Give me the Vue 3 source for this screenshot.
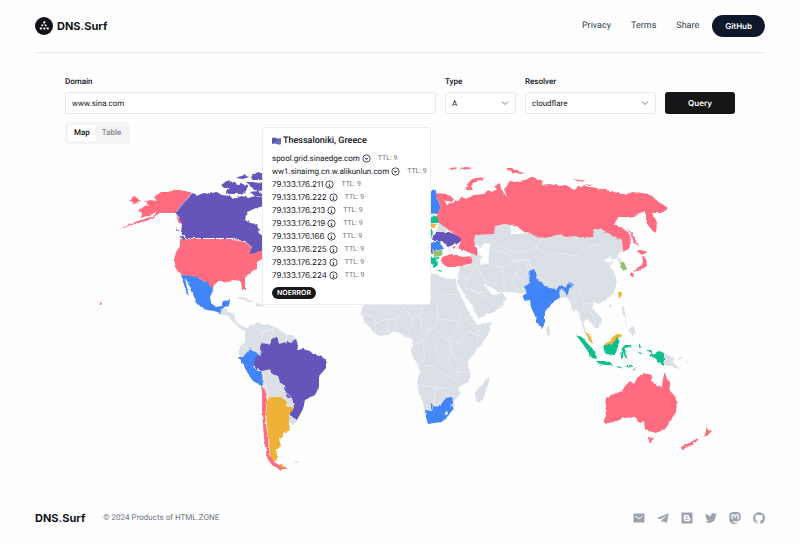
<script setup>
import { ref } from 'vue'

const domain = ref('www.sina.com')
const type = ref('A')
const resolver = ref('cloudflare')
const view = ref('Map')

const answers = [
  { value: 'spool.grid.sinaedge.com', kind: 'alias' },
  { value: 'ww1.sinaimg.cn.w.alikunlun.com', kind: 'alias' },
  { value: '79.133.176.211', kind: 'ip' },
  { value: '79.133.176.222', kind: 'ip' },
  { value: '79.133.176.213', kind: 'ip' },
  { value: '79.133.176.219', kind: 'ip' },
  { value: '79.133.176.166', kind: 'ip' },
  { value: '79.133.176.225', kind: 'ip' },
  { value: '79.133.176.223', kind: 'ip' },
  { value: '79.133.176.224', kind: 'ip' },
]

const land = [
  // Central America and the Caribbean
  'M221 309L226 308 228 312 234 313 235 320 240 325 246 327 245 331 239 328 233 322 229 317 220 313Z',
  'M236 298L242 297 254 302 248 302 241 299Z',
  'M256 303L264 305 263 307 256 306Z',
  // South America
  'M245 331L250 325 253 325 258 322 262 325 270 325 275 327 280 330 284 333 287 335 293 335 298 340 298 348 285 375 292 398 294 407 289 406 281 399 268 398 263 388 258 356 246 355 241 357 239 354 238 350 241 346 245 341Z',
  'M289 415L297 419 297 422 293 424 289 423 288 419Z',
  'M293 462L298 461 297 463Z',
  // Africa
  'M363 304L361 314 365 322 370 328 374 333 379 336 388 335 396 332 401 333 405 337 411 338 413 345 411 352 414 358 418 365 420 373 417 383 418 390 422 400 425 411 440 414 454 406 455 400 460 396 459 387 463 385 470 381 470 374 469 367 468 362 473 354 481 345 488 335 492 322 484 323 477 325 473 319 468 311 464 302 457 287 456 279 449 279 443 278 438 275 430 273 426 282 410 280 400 276 380 279 371 290Z',
  'M489 376L489 383 486 391 483 400 479 403 476 401 475 394 478 388 482 385 485 381Z',
  // Arabia and the Middle East
  'M457 282L458 275 459 267 472 264 478 257 481 265 488 264 491 235 540 233 620 228 624 247 621 252 617 256 624 262 621 264 617 258 612 260 611 257 605 259 604 262 608 263 613 262 610 266 615 273 617 283 613 294 606 300 599 304 594 302 592 308 598 314 602 319 601 324 596 329 594 326 587 319 583 321 586 332 592 342 590 341 584 332 581 321 578 310 573 311 568 297 560 298 540 297 526 293 519 294 514 292 500 292 494 289 491 287 487 286 483 282 486 288 491 292 491 295 498 295 501 291 506 298 502 306 494 312 479 318 476 314 472 305 465 296Z',
  'M471 256L469 251 477 253 481 257 480 263 472 262Z',
  'M474 236L480 234 492 234 495 225 510 224 512 240 494 244 484 243 481 248 474 242Z',
  'M437 225L441 223 447 228 446 233 436 233Z',
  // South and south-east Asian islands
  'M547 326L550 330 550 335 547 334Z',
  'M621 306L624 307 625 314 628 319 623 315Z',
  'M628 329L633 326 636 333 632 336 629 331Z',
  'M625 320L627 325 626 327Z',
  'M664 353L669 355 674 359 673 362 681 370 676 369 671 366 664 366Z',
  'M677 359L683 356 680 360Z',
  'M613 305L609 305 610 308Z',
  'M686 361L689 363 687 363Z',
  // Western Europe
  'M380 262L398 257 392 246 410 238 431 236 431 256 420 252 405 259 395 270 381 270Z',
  'M406 222L405 208 420 192 431 190 431 197 419 210 416 224Z',
  // Small Pacific islands
  'M704 394L706 396 705 396Z',
  'M729 386L730 387 729 388Z',
]

const countries = [
  // Alaska and mainland United States
  { fill: '#ff6b7f', d: 'M192 193L185 191 175 190 168 192 161 192 154 197 157 201 150 200 145 202 149 205 143 206 138 211 142 213 141 217 150 216 156 211 155 215 148 218 135 222 126 226 118 229 135 224 149 220 160 213 168 213 175 213 178 218 181 215 183 222 184 227 179 223 175 213Z' },
  { fill: '#ff6b7f', d: 'M129 201L135 196 138 199 141 201 134 204 132 202ZM143 189L146 190 143 190Z' },
  { fill: '#ff6b7f', d: 'M182 239L233 239 238 241 246 242 252 248 249 254 256 252 264 248 264 258 257 262 257 268 251 272 245 277 245 290 242 289 241 281 233 280 228 282 219 281 214 285 213 289 209 286 207 281 203 282 198 277 187 277 180 274 176 269 174 260 176 252 180 246 180 240Z' },
  { fill: '#ff6b7f', d: 'M100 303L102 303 101 305ZM97 301L98 301 98 302Z' },
  // Canada with its Arctic islands
  { fill: '#6554ba', d: 'M192 193L198 195 204 193 209 194 216 192 222 195 230 196 233 199 242 196 249 198 254 196 264 198 264 206 256 208 247 212 245 219 248 222 257 225 260 234 264 237 264 249 255 253 249 254 252 247 245 241 238 240 233 238 187 238 181 233 182 224 178 216 175 212Z' },
  { fill: '#6554ba', d: 'M221 185L227 181 235 182 238 186 232 188 224 188ZM225 192L231 187 242 184 248 185 246 191 241 194 230 194ZM236 178L244 175 249 177 243 179ZM250 177L258 172 264 174 264 180 254 180ZM246 182L253 182 264 184 264 191 254 190 251 186ZM250 192L258 191 264 194 264 197 255 196ZM181 235L186 239 184 240 180 237ZM176 227L179 231 177 231Z' },
  { fill: '#4285f8', d: 'M181 275L198 277 203 282 207 281 213 289 210 297 211 303 216 307 221 306 223 301 230 300 228 306 223 308 220 313 214 311 207 310 197 305 195 298 191 291 187 281 185 278 187 288 189 296 186 291 184 284Z' },
  // South America
  { fill: '#4285f8', d: 'M239 357L243 357 250 349 256 352 260 356 254 361 254 367 257 371 262 371 263 387 253 381 248 374 243 364Z' },
  { fill: '#6554ba', d: 'M261 343L267 344 271 343 271 339 277 337 279 344 286 342 291 343 296 339 298 347 297 350 303 349 310 351 313 354 320 356 326 360 326 368 319 376 319 387 315 395 305 400 303 409 297 420 289 414 294 407 292 398 286 396 285 386 280 382 278 376 271 373 269 369 263 371 256 369 253 363 256 357 261 355 260 348Z' },
  { fill: '#ff6b7f', d: 'M262 387L265 390 267 400 265 417 267 432 270 456 277 464 287 468 281 470 272 465 267 458 264 438 262 410Z' },
  { fill: '#efb239', d: 'M269 397L275 397 281 397 287 402 286 406 292 407 294 408 289 415 289 425 291 430 283 433 283 438 279 438 281 446 276 450 278 457 276 462 271 458 268 436 266 415 267 402ZM281 464L287 469 281 467Z' },
  // South Africa
  { fill: '#4285f8', d: 'M425 410L431 411 431 403 435 407 441 404 446 398 452 397 453 403 451 406 454 408 448 416 442 422 434 423 428 424 426 417Z' },
  // Finland, Baltics and eastern Europe
  { fill: '#4285f8', d: 'M428 192L436 190 437 197 441 209 438 213 430 214Z' },
  { fill: '#0dbf8d', d: 'M431 217L438 216 439 223 430 223ZM427 229L433 229 432 238 427 238Z' },
  { fill: '#efb239', d: 'M429 223L436 224 435 228 430 227Z' },
  { fill: '#6554ba', d: 'M433 236L436 232 449 232 461 237 461 242 452 245 448 247 442 241 432 241ZM428 248L432 248 433 253 429 252Z' },
  { fill: '#4285f8', d: 'M430 243L440 241 444 249 434 251 430 248Z' },
  { fill: '#95c36b', d: 'M433 251L443 250 441 256 434 257Z' },
  { fill: '#0dbf8d', d: 'M429 258L440 257 436 260 438 265 434 268 431 263ZM436 270L441 270 440 271Z' },
  { fill: '#ff6b7f', d: 'M442 257L452 254 463 257 471 256 473 263 460 266 454 267 445 266 441 261ZM452 247L456 246 454 249Z' },
  // Russia and its Arctic islands
  { fill: '#ff6b7f', d: 'M436 193L446 194 454 199 452 202 444 200 447 205 454 202 459 200 462 196 466 199 474 195 484 194 488 190 492 192 497 189 494 186 500 183 501 189 507 197 504 188 510 181 516 182 524 180 533 177 543 181 541 185 549 184 560 186 566 185 574 190 580 186 592 187 601 189 611 191 617 193 628 195 632 192 642 193 650 194 657 201 668 208 662 213 652 213 657 222 656 233 650 228 646 222 646 211 637 214 634 217 618 217 614 225 622 228 628 232 631 239 629 249 623 252 622 240 614 237 603 230 594 229 593 237 583 238 575 236 567 237 558 234 552 237 542 238 533 235 525 232 516 226 505 224 495 226 494 234 475 235 474 241 477 249 478 256 468 252 458 248 462 239 451 232 446 228 438 222 437 213 441 209Z' },
  { fill: '#ff6b7f', d: 'M466 190L467 184 472 179 483 177 484 179 476 181 471 186 473 190ZM448 169L455 167 457 169 451 170ZM459 168L467 167 472 168 466 170ZM506 168L512 168 517 171 524 173 520 174 512 172ZM573 179L580 180 586 180 580 182ZM585 184L593 184 590 185ZM644 189L646 190 644 190ZM628 228L632 234 637 242 639 247 635 243 631 236Z' },
  // Japan, Korea and Taiwan
  { fill: '#ff6b7f', d: 'M639 249L644 251 647 252 642 255 638 252ZM642 256L646 258 647 266 641 270 633 272 637 268 642 265 643 261ZM631 272L634 274 632 278 630 275Z' },
  { fill: '#95c36b', d: 'M620 263L624 262 627 269 623 271Z' },
  { fill: '#efb239', d: 'M619 292L621 292 620 299 618 296Z' },
  // India
  { fill: '#4285f8', d: 'M528 271L534 269 537 274 536 279 542 283 549 288 557 289 559 286 565 287 570 281 573 285 569 289 568 295 565 292 562 289 559 292 560 297 554 302 549 306 545 312 545 322 542 329 539 326 535 316 531 307 530 300 525 301 522 296 527 293 524 287 530 283Z' },
  // Malaysia and Indonesia
  { fill: '#efb239', d: 'M586 333L590 334 593 344 589 341ZM603 345L610 341 614 336 618 333 622 336 618 338 611 345 605 347Z' },
  { fill: '#0dbf8d', d: 'M576 335L582 337 589 345 595 351 597 359 592 358 587 350 582 343ZM596 361L604 361 610 362 614 366 606 365 599 364ZM603 345L611 345 618 337 619 342 617 350 615 355 605 354ZM622 348L625 345 632 345 631 347 624 348 627 351 625 353 628 359 625 357 623 352 623 359 621 358ZM616 366L623 367 619 368ZM625 366L633 366 630 368ZM633 369L636 367 634 371ZM639 343L641 347 639 348ZM638 352L643 353 640 354ZM646 350L651 350 654 355 659 351 664 353 664 367 659 362 655 358 649 356 652 353Z' },
  // Australia and New Zealand
  { fill: '#ff6b7f', d: 'M606 398L611 395 617 393 622 391 625 386 630 381 634 384 637 378 642 375 644 373 652 375 651 380 658 386 662 387 663 378 665 372 667 379 670 382 670 391 674 395 677 402 676 412 670 422 665 429 656 433 645 430 644 421 640 423 635 417 624 418 615 422 609 423 603 422 606 416 605 407ZM648 437L654 438 650 443Z' },
  { fill: '#ff6b7f', d: 'M706 426L708 430 712 431 707 436 703 438 706 433ZM698 438L696 442 687 447 682 450 681 447 691 442Z' },
]

const borders = [
  'M363 304L430 304M374 304L386 315 394 307M363 314L374 317 376 323 387 319 397 319 405 306M376 323L375 334M387 320L389 334M397 319L394 332M405 308L412 319 421 314 422 304M413 320L407 337M420 315L422 333 434 327 438 319 437 304 431 299 430 274M413 345L423 341 430 330M434 328L446 340 455 334 459 320 463 309M446 340L460 343 468 331 484 337M450 341L451 354 448 363 457 372 458 382M435 344L439 359 433 366 420 366M451 354L469 365M457 372L470 372M417 385L446 388M435 370L449 377 457 380M436 388L432 410M437 389L449 396M423 343L425 360 418 364M438 319L459 321M465 320L478 330 478 345M443 294L463 295M449 347L452 351',
  'M459 275L468 280 465 288 477 292 489 299M468 280L476 265M477 292L488 292M488 265L502 267 505 291M502 267L514 261 519 269 512 280 520 294M491 249L504 252 514 261 529 259 532 270M500 246L515 253 526 251 536 247 543 236M536 247L548 255 558 253 574 256 587 248 602 243M529 259L526 269M552 286L540 278 535 270M568 283L580 289 584 303M584 303L592 304M584 304L580 315M584 308L592 314 596 323M489 303L500 307M515 276L525 281M475 264L486 281M477 258L486 263',
  'M241 346L252 350 262 343 262 331 253 327M271 340L273 328M262 332L276 328M286 344L287 335M263 371L264 382 270 396M276 397L281 388 291 397',
  'M220 309L227 313M229 318L235 319',
]

const socials = [
  { name: 'Email', d: 'M2 3h20a1 1 0 0 1 1 1v16a1 1 0 0 1-1 1H2a1 1 0 0 1-1-1V4a1 1 0 0 1 1-1zm1.500 4v1.500L12 14l8.500-5.500V7L12 12.200z' },
  { name: 'Telegram', d: 'M22.300 3.100L1.800 11.200c-1.200.5-1.200 1.300-.1 1.700l5.100 1.700L18.600 7.200c.6-.4 1.100-.1.600.3L9.600 16.200l-.3 4.700c.6 0 .8-.2 1.100-.5l2.500-2.400 5 3.700c.9.5 1.600.3 1.800-.8l3.300-16c.3-1.400-.5-2-1.400-1.700z' },
  { name: 'Blogger', d: 'M2 1h20a1 1 0 0 1 1 1v20a1 1 0 0 1-1 1H2a1 1 0 0 1-1-1V2a1 1 0 0 1 1-1zm7 4.500A3.500 3.500 0 0 0 5.500 9v6A3.500 3.500 0 0 0 9 18.500h6.200A3.500 3.500 0 0 0 18.700 15v-2.200c0-1-.7-1.500-1.600-1.700-.6-.2-.7-.6-.7-1.300A4.300 4.300 0 0 0 12 5.500zm.6 3.100h3a1.100 1.100 0 0 1 0 2.200h-3a1.100 1.100 0 0 1 0-2.200zm0 4.800h5a1.100 1.100 0 0 1 0 2.200h-5a1.100 1.100 0 0 1 0-2.200z' },
  { name: 'Twitter', d: 'M23.953 4.570a10 10 0 0 1-2.825.775 4.958 4.958 0 0 0 2.163-2.723c-.951.555-2.005.959-3.127 1.184a4.920 4.920 0 0 0-8.384 4.482C7.690 8.095 4.067 6.130 1.640 3.162a4.822 4.822 0 0 0-.666 2.475c0 1.710.870 3.213 2.188 4.096a4.904 4.904 0 0 1-2.228-.616v.060a4.923 4.923 0 0 0 3.946 4.827 4.996 4.996 0 0 1-2.212.085 4.936 4.936 0 0 0 4.604 3.417 9.867 9.867 0 0 1-6.102 2.105c-.390 0-.779-.023-1.170-.067a13.995 13.995 0 0 0 7.557 2.209c9.053 0 13.998-7.496 13.998-13.985 0-.210 0-.420-.015-.630A9.935 9.935 0 0 0 24 4.590z' },
  { name: 'Mastodon', d: 'M23.268 5.313c-.35-2.578-2.617-4.61-5.304-5.004C17.51.242 15.792 0 11.813 0h-.03c-3.98 0-4.835.242-5.288.309C3.882.692 1.496 2.518.917 5.127.64 6.412.61 7.837.661 9.143c.074 1.874.088 3.745.26 5.611.118 1.24.325 2.47.62 3.68.55 2.237 2.777 4.098 4.96 4.857 2.336.792 4.849.923 7.256.38.265-.061.527-.132.786-.213.585-.184 1.27-.39 1.774-.753a.057.057 0 0 0 .023-.043v-1.809a.052.052 0 0 0-.02-.041.053.053 0 0 0-.046-.01 20.282 20.282 0 0 1-4.709.545c-2.73 0-3.463-1.284-3.674-1.818a5.593 5.593 0 0 1-.319-1.433.053.053 0 0 1 .066-.054c1.517.363 3.072.546 4.632.546.376 0 .75 0 1.125-.01 1.57-.044 3.224-.124 4.768-.422.038-.008.077-.015.11-.024 2.435-.464 4.753-1.92 4.989-5.604.008-.145.03-1.52.03-1.67.002-.512.167-3.63-.024-5.545zm-3.748 9.195h-2.561V8.29c0-1.309-.55-1.976-1.67-1.976-1.23 0-1.846.79-1.846 2.35v3.403h-2.546V8.663c0-1.56-.617-2.35-1.848-2.35-1.112 0-1.668.668-1.67 1.977v6.218H4.822V8.102c0-1.31.337-2.35 1.011-3.12.696-.77 1.608-1.164 2.74-1.164 1.311 0 2.302.5 2.962 1.498l.638 1.06.638-1.06c.66-.999 1.65-1.498 2.96-1.498 1.13 0 2.043.395 2.74 1.164.675.77 1.012 1.81 1.012 3.12z' },
  { name: 'GitHub', d: 'M12 .297c-6.630 0-12 5.373-12 12 0 5.303 3.438 9.800 8.205 11.385.600.113.820-.258.820-.577 0-.285-.010-1.040-.015-2.040-3.338.724-4.042-1.610-4.042-1.610C4.422 18.070 3.633 17.700 3.633 17.700c-1.087-.744.084-.729.084-.729 1.205.084 1.838 1.236 1.838 1.236 1.070 1.835 2.809 1.305 3.495.998.108-.776.417-1.305.760-1.605-2.665-.300-5.466-1.332-5.466-5.930 0-1.310.465-2.380 1.235-3.220-.135-.303-.540-1.523.105-3.176 0 0 1.005-.322 3.300 1.230.960-.267 1.980-.399 3-.405 1.020.006 2.040.138 3 .405 2.280-1.552 3.285-1.230 3.285-1.230.645 1.653.240 2.873.120 3.176.765.840 1.230 1.910 1.230 3.220 0 4.610-2.805 5.625-5.475 5.920.420.360.810 1.096.810 2.220 0 1.606-.015 2.896-.015 3.286 0 .315.210.690.825.570C20.565 22.092 24 17.592 24 12.297c0-6.627-5.373-12-12-12' },
]
</script>

<template>
  <div class="page">
    <header class="header">
      <a class="brand" href="#">
        <svg class="brand-mark" viewBox="0 0 26 26" aria-hidden="true">
          <circle cx="13" cy="13" r="13" fill="#111318" />
          <path d="M13 8L9 17M13 8L17 17" stroke="#777" stroke-width="1" />
          <g fill="#fff">
            <rect x="12" y="6" width="3" height="3" rx="1" />
            <rect x="9" y="11" width="3" height="2" rx="1" />
            <rect x="14" y="11" width="3" height="2" rx="1" />
            <rect x="7" y="15" width="3" height="3" rx="1" />
            <rect x="12" y="15" width="3" height="3" rx="1" />
            <rect x="17" y="15" width="3" height="3" rx="1" />
          </g>
        </svg>
        <span class="brand-name">DNS<i>.</i>Surf</span>
      </a>
      <nav class="nav">
        <a href="#">Privacy</a>
        <a href="#">Terms</a>
        <a href="#">Share</a>
        <a class="github" href="#">GitHub</a>
      </nav>
    </header>

    <main class="main">
      <form class="query" @submit.prevent>
        <div class="field field-domain">
          <label for="domain">Domain</label>
          <input id="domain" v-model="domain" class="control" type="text" />
        </div>
        <div class="field field-type">
          <label for="type">Type</label>
          <div class="select">
            <select id="type" v-model="type" class="control">
              <option>A</option>
              <option>AAAA</option>
              <option>CNAME</option>
            </select>
            <svg viewBox="0 0 8 8" aria-hidden="true"><path d="M1 2.500L4 5.500 7 2.500" /></svg>
          </div>
        </div>
        <div class="field field-resolver">
          <label for="resolver">Resolver</label>
          <div class="select">
            <select id="resolver" v-model="resolver" class="control">
              <option>cloudflare</option>
              <option>google</option>
            </select>
            <svg viewBox="0 0 8 8" aria-hidden="true"><path d="M1 2.500L4 5.500 7 2.500" /></svg>
          </div>
        </div>
        <button class="submit" type="submit">Query</button>
      </form>

      <section class="results">
        <div class="tabs" role="tablist">
          <button
            v-for="tab in ['Map', 'Table']"
            :key="tab"
            type="button"
            role="tab"
            :aria-selected="view === tab"
            :class="['tab', { active: view === tab }]"
            @click="view = tab"
          >{{ tab }}</button>
        </div>

        <svg class="map" viewBox="65 144 670 346" role="img" aria-label="World map of DNS answers">
          <defs>
            <filter id="coast" x="0" y="0" width="1" height="1" color-interpolation-filters="sRGB">
              <feTurbulence type="fractalNoise" baseFrequency="0.25" numOctaves="2" seed="4" result="noise" />
              <feDisplacementMap in="SourceGraphic" in2="noise" scale="3" xChannelSelector="R" yChannelSelector="G" />
            </filter>
          </defs>
          <g filter="url(#coast)">
            <rect x="65" y="144" width="670" height="346" fill="none" />
            <path v-for="d in land" :key="d" :d="d" fill="#dae0e6" />
            <path v-for="c in countries" :key="c.d" :d="c.d" :fill="c.fill" />
            <circle cx="446" cy="413" r="2" fill="#dae0e6" />
          </g>
          <path v-for="d in borders" :key="d" :d="d" class="border" />
          <path d="M192 193L176 212" class="border" />
          <path d="M100 302L102 304 100 305Z" fill="#ff6b7f" />
        </svg>

        <div class="tooltip" role="tooltip">
          <h2>
            <svg viewBox="0 0 9 8" aria-hidden="true">
              <path d="M0 1Q2 0 4 1T9 1V7Q7 8 5 7T0 7Z" fill="#5656a8" />
              <path d="M4 3H9M4 5H9M0 6H9" stroke="#9d9dd2" stroke-width=".5" />
            </svg>
            Thessaloniki, Greece
          </h2>
          <ul>
            <li v-for="a in answers" :key="a.value">
              <span :class="a.kind">{{ a.value }}</span>
              <svg viewBox="0 0 16 16" aria-hidden="true">
                <circle cx="8" cy="8" r="6.500" />
                <path v-if="a.kind === 'ip'" d="M6.500 7.500H8V11.500M6.500 11.500H9.500M8 4.500V5.500" />
                <path v-else d="M5 6.500L8 9.500 11 6.500M6 8.500H10" />
              </svg>
              <small>TTL: 9</small>
            </li>
          </ul>
          <span class="status">NOERROR</span>
        </div>
      </section>
    </main>

    <footer class="footer">
      <a class="brand-name" href="#">DNS<i>.</i>Surf</a>
      <span class="copyright">© 2024 Products of HTML.ZONE</span>
      <div class="socials">
        <a v-for="s in socials" :key="s.name" href="#" :aria-label="s.name">
          <svg viewBox="0 0 24 24" aria-hidden="true"><path :d="s.d" fill-rule="evenodd" /></svg>
        </a>
      </div>
    </footer>
  </div>
</template>

<style>
body {
  background: #fefefe;
}
</style>

<style scoped>
.page {
  box-sizing: border-box;
  padding: 0 35px;
  font-family: Roboto, "Liberation Sans", sans-serif;
  font-size: 8px;
  color: #111318;
  text-rendering: geometricPrecision;
}
.brand-name,
.github,
.submit,
.ip,
.status {
  font-family: Inter, "Liberation Sans", sans-serif;
}
a {
  color: inherit;
  text-decoration: none;
}
.header {
  display: flex;
  align-items: center;
  justify-content: space-between;
  height: 52px;
  border-bottom: 1px solid #e9eaec;
}
.brand {
  display: flex;
  align-items: center;
  gap: 4px;
}
.brand-mark {
  width: 18px;
  height: 18px;
}
.brand-name {
  font-size: 11px;
  font-weight: 700;
}
.brand-name i {
  font-style: normal;
  color: #4f46e5;
}
.nav {
  display: flex;
  align-items: center;
  gap: 20px;
  font-size: 9px;
  color: #334155;
}
.github {
  margin-left: -7px;
  padding: 0 13px;
  border-radius: 11px;
  background: #0f172a;
  color: #fff;
  font-size: 8px;
  font-weight: 600;
  line-height: 22px;
}
.main {
  padding: 24px 30px 0;
}
.query {
  display: flex;
  align-items: flex-end;
  gap: 9px;
}
.field {
  display: flex;
  flex-direction: column;
  gap: 5px;
}
.field-domain {
  flex: 1;
}
.field-type {
  width: 71px;
}
.field-resolver {
  width: 131px;
}
label {
  font-size: 8px;
  font-weight: 500;
  line-height: 10px;
}
.control {
  box-sizing: border-box;
  width: 100%;
  height: 22px;
  padding: 0 6px;
  border: 1px solid #e8e8eb;
  border-radius: 3px;
  background: #fff;
  color: #18181b;
  font: inherit;
  text-rendering: inherit;
  appearance: none;
}
.select {
  position: relative;
}
.select svg {
  position: absolute;
  top: 7px;
  right: 7px;
  width: 8px;
  height: 8px;
  fill: none;
  stroke: #777;
  stroke-width: 1;
  pointer-events: none;
}
.submit {
  width: 70px;
  height: 22px;
  border: 0;
  border-radius: 3px;
  background: #161618;
  color: #fff;
  font-size: 8px;
  font-weight: 600;
  text-rendering: inherit;
}
.results {
  position: relative;
  padding-top: 8px;
}
.tabs {
  display: flex;
  width: max-content;
  padding: 3px;
  border-radius: 4px;
  background: #f4f4f5;
}
.tab {
  padding: 0 6px;
  border: 0;
  border-radius: 2px;
  background: transparent;
  color: #85858c;
  font: inherit;
  font-weight: 500;
  line-height: 16px;
  text-rendering: inherit;
}
.tab.active {
  background: #fff;
  color: #111318;
}
.map {
  display: block;
  width: 100%;
}
.border {
  fill: none;
  stroke: #f1f4f7;
  stroke-width: 0.6;
}
.tooltip {
  position: absolute;
  top: 13px;
  left: 197px;
  box-sizing: border-box;
  width: 169px;
  padding: 7px 8px 5px 9px;
  border: 1px solid #ededf0;
  border-radius: 3px;
  background: rgba(255, 255, 255, 0.98);
}
.tooltip h2 {
  display: flex;
  align-items: center;
  gap: 2px;
  margin: 0 0 5px;
  font-size: 9px;
  font-weight: 500;
  line-height: 12px;
}
.tooltip h2 svg {
  width: 9px;
  height: 8px;
}
.tooltip ul {
  margin: 0;
  padding: 0;
  list-style: none;
}
.tooltip li {
  display: flex;
  align-items: center;
  line-height: 13px;
  white-space: nowrap;
}
.tooltip li svg {
  flex: none;
  width: 9px;
  height: 9px;
  margin: 0 7px 0 2px;
  fill: none;
  stroke: #222;
  stroke-width: 1.4;
}
.tooltip small {
  font-size: 7px;
  color: #71717a;
}
.status {
  display: block;
  width: max-content;
  margin-top: 5px;
  padding: 0 5px;
  border-radius: 6px;
  background: #18181b;
  color: #fff;
  font-size: 7px;
  font-weight: 600;
  line-height: 12px;
}
.footer {
  display: flex;
  align-items: center;
  padding: 20px 0;
  line-height: 16px;
}
.copyright {
  margin-left: 18px;
  color: #6b7280;
}
.socials {
  display: flex;
  gap: 12px;
  margin-left: auto;
}
.socials a {
  display: flex;
}
.socials svg {
  width: 12px;
  height: 12px;
  fill: #9ca3af;
}
</style>
